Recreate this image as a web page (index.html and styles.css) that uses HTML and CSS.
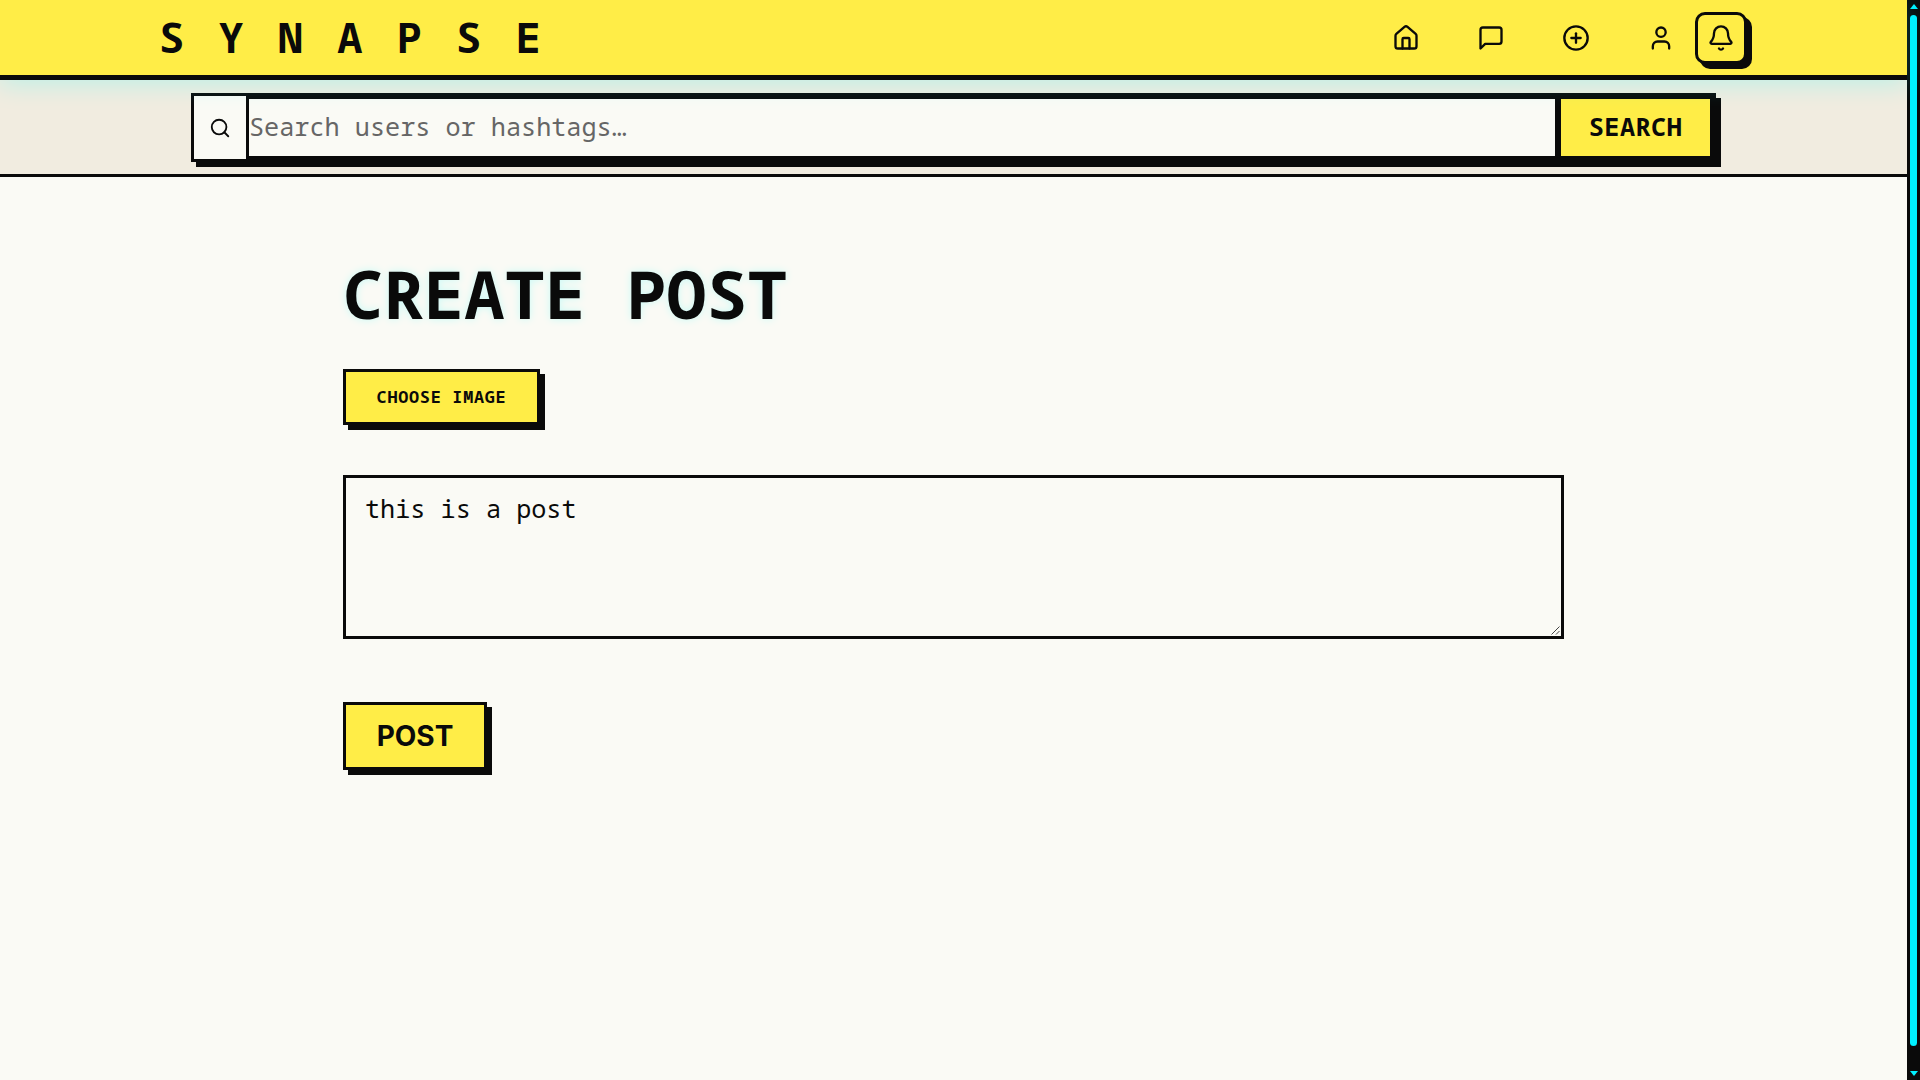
FILE: index.html
```html
<!DOCTYPE html>
<html lang="en">
<head>
    <meta charset="UTF-8">
    <meta name="viewport" content="width=device-width, initial-scale=1.0">
    <title>Synapse - Create Post</title>
    <link rel="stylesheet" href="styles.css">
</head>
<body>
    <div class="page">
        <header class="site-header">
            <div class="logo">SYNAPSE</div>
            <nav class="nav">
                <a class="nav-link nav-link-spaced" href="#">
                    <svg class="icon" viewBox="0 0 24 24"><path d="M15 21v-8a1 1 0 0 0-1-1h-4a1 1 0 0 0-1 1v8"/><path d="M3 10a2 2 0 0 1 .709-1.528l7-5.999a2 2 0 0 1 2.582 0l7 5.999A2 2 0 0 1 21 10v9a2 2 0 0 1-2 2H5a2 2 0 0 1-2-2z"/></svg>
                </a>
                <a class="nav-link nav-link-spaced" href="#">
                    <svg class="icon" viewBox="0 0 24 24"><path d="M21 15a2 2 0 0 1-2 2H7l-4 4V5a2 2 0 0 1 2-2h14a2 2 0 0 1 2 2z"/></svg>
                </a>
                <a class="nav-link nav-link-spaced" href="#">
                    <svg class="icon" viewBox="0 0 24 24"><circle cx="12" cy="12" r="10"/><path d="M8 12h8"/><path d="M12 8v8"/></svg>
                </a>
                <a class="nav-link" href="#">
                    <svg class="icon" viewBox="0 0 24 24"><path d="M19 21v-2a4 4 0 0 0-4-4H9a4 4 0 0 0-4 4v2"/><circle cx="12" cy="7" r="4"/></svg>
                </a>
                <button class="bell-button" type="button">
                    <svg class="icon" viewBox="0 0 24 24"><path d="M10.268 21a2 2 0 0 0 3.464 0"/><path d="M3.262 15.326A1 1 0 0 0 4 17h16a1 1 0 0 0 .74-1.673C19.41 13.956 18 12.499 18 8A6 6 0 0 0 6 8c0 4.499-1.411 5.956-2.738 7.326"/></svg>
                </button>
            </nav>
        </header>

        <section class="search-bar">
            <form class="search-form">
                <div class="search-icon">
                    <svg class="icon-small" viewBox="0 0 24 24"><path d="m21 21-4.34-4.34"/><circle cx="11" cy="11" r="8"/></svg>
                </div>
                <input class="search-input" type="text" placeholder="Search users or hashtags…">
                <button class="search-button" type="submit">SEARCH</button>
            </form>
        </section>

        <main class="content">
            <h1 class="title">CREATE POST</h1>
            <form class="post-form">
                <label class="choose-image" for="image">CHOOSE IMAGE</label>
                <input class="file-input" type="file" id="image" accept="image/*">
                <div class="post-text-wrap">
                    <textarea class="post-text" id="caption">this is a post</textarea>
                    <svg class="post-grip" viewBox="0 0 9 9"><path d="M0.5 8.5 8.5 0.5"/><path d="M5 8.5 8.5 5"/></svg>
                </div>
                <button class="post-button" type="submit">POST</button>
            </form>
        </main>
    </div>

    <div class="scrollbar">
        <div class="scroll-arrow scroll-arrow-up"></div>
        <div class="scroll-thumb"></div>
        <div class="scroll-arrow scroll-arrow-down"></div>
    </div>
</body>
</html>
```

FILE: styles.css
```css
* {
    box-sizing: border-box;
}
body {
    margin: 0;
    height: 100vh;
    overflow: hidden;
    display: flex;
    background: #fafaf5;
    color: #0a0a0a;
    font-family: "Noto Sans Mono", "DejaVu Sans Mono", monospace;
}
.page {
    flex: 1;
    min-width: 0;
}

/* header */
.site-header {
    position: relative;
    z-index: 2;
    height: 80px;
    padding: 0 160px;
    display: flex;
    align-items: center;
    justify-content: space-between;
    background: #ffed47;
    border-bottom: 5px solid #0a0a0a;
    box-shadow: 0 4px 24px rgba(0, 255, 255, 0.22);
}
.logo {
    margin-left: -1px;
    padding-bottom: 1px;
    font-size: 42px;
    line-height: 50px;
    font-weight: 700;
    letter-spacing: 34.2px;
}
.nav {
    display: flex;
    align-items: center;
    gap: 20px;
}
.nav-link {
    display: flex;
    color: #0a0a0a;
}
.nav-link-spaced {
    margin-right: 37px;
}
.icon, .icon-small {
    fill: none;
    stroke: currentColor;
    stroke-width: 2;
    stroke-linecap: round;
    stroke-linejoin: round;
}
.icon {
    width: 28px;
    height: 28px;
}
.icon-small {
    width: 22px;
    height: 22px;
}
.bell-button {
    width: 52px;
    height: 52px;
    padding: 0;
    display: flex;
    align-items: center;
    justify-content: center;
    color: #0a0a0a;
    background: #ffed47;
    border: 3px solid #0a0a0a;
    border-radius: 10px;
    box-shadow: 5px 5px 0 #0a0a0a;
}

/* search */
.search-bar {
    height: 97px;
    padding: 13px 0 0 191px;
    background: #f1ece0;
    border-bottom: 3px solid #0a0a0a;
}
.search-form {
    width: 1525px;
    height: 69px;
    display: flex;
    box-shadow: 5px 5px 0 #0a0a0a;
}
.search-icon {
    width: 58px;
    display: flex;
    align-items: center;
    justify-content: center;
    background: #fafaf5;
    border: 3px solid #0a0a0a;
}
.search-input {
    flex: 1;
    min-width: 0;
    padding: 0 0 4px;
    background: #fafaf5;
    border: 6px solid #0a0a0a;
    border-left: 0;
    border-right: 0;
    border-radius: 0;
    outline: none;
    font-family: "Noto Sans Mono", "DejaVu Sans Mono", monospace;
    font-size: 25.2px;
    color: #0a0a0a;
}
.search-input::placeholder {
    color: #666;
    opacity: 1;
}
.search-button {
    width: 161px;
    padding: 0 0 4px;
    background: #ffed47;
    border: 6px solid #0a0a0a;
    border-radius: 0;
    font-family: "Noto Sans Mono", "DejaVu Sans Mono", monospace;
    font-size: 25.2px;
    font-weight: 700;
    letter-spacing: 0.5px;
    color: #0a0a0a;
}

/* create post */
.content {
    width: 1221px;
    margin-left: 343px;
    padding-top: 78px;
}
.title {
    margin: 0 0 37px;
    font-size: 67.2px;
    line-height: 77px;
    font-weight: 700;
    letter-spacing: 0.1px;
    text-shadow: 0 0 8px rgba(0, 255, 255, 0.2);
}
.post-form {
    display: flex;
    flex-direction: column;
    align-items: flex-start;
}
.file-input {
    display: none;
}
.choose-image {
    width: 197px;
    height: 56px;
    padding-bottom: 1px;
    display: flex;
    align-items: center;
    justify-content: center;
    margin-bottom: 50px;
    background: #ffed47;
    border: 3px solid #0a0a0a;
    box-shadow: 5px 5px 0 #0a0a0a;
    font-size: 16.8px;
    font-weight: 700;
    letter-spacing: 0.75px;
}
.post-text-wrap {
    position: relative;
    margin-bottom: 63px;
}
.post-text {
    display: block;
    width: 1221px;
    height: 164px;
    padding: 13px 19px;
    background: #fafaf5;
    border: 3px solid #0a0a0a;
    border-radius: 0;
    outline: none;
    resize: none;
    font-family: "Noto Sans Mono", "DejaVu Sans Mono", monospace;
    font-size: 25.2px;
    color: #0a0a0a;
}
.post-grip {
    position: absolute;
    right: 4px;
    bottom: 4px;
    width: 9px;
    height: 9px;
    fill: none;
    stroke: #444;
    stroke-width: 1;
}
.post-button {
    width: 144px;
    height: 68px;
    padding: 0 0 1px;
    background: #ffed47;
    border: 3px solid #0a0a0a;
    border-radius: 0;
    box-shadow: 5px 5px 0 #0a0a0a;
    font-family: Inter, "Liberation Sans", sans-serif;
    font-size: 28px;
    font-weight: 700;
    color: #0a0a0a;
}

/* page scrollbar */
.scrollbar {
    flex: none;
    width: 13px;
    height: 100vh;
    padding: 4px 0;
    display: flex;
    flex-direction: column;
    align-items: center;
    background: #0a0a0a;
}
.scroll-arrow {
    flex: none;
    width: 0;
    height: 0;
    border-left: 4px solid transparent;
    border-right: 4px solid transparent;
}
.scroll-arrow-up {
    border-bottom: 5px solid #00f0ff;
}
.scroll-arrow-down {
    border-top: 5px solid #00f0ff;
}
.scroll-thumb {
    flex: 1;
    width: 7px;
    margin: 6px 0 25px;
    background: #00f0ff;
    border-radius: 4px;
}
```
